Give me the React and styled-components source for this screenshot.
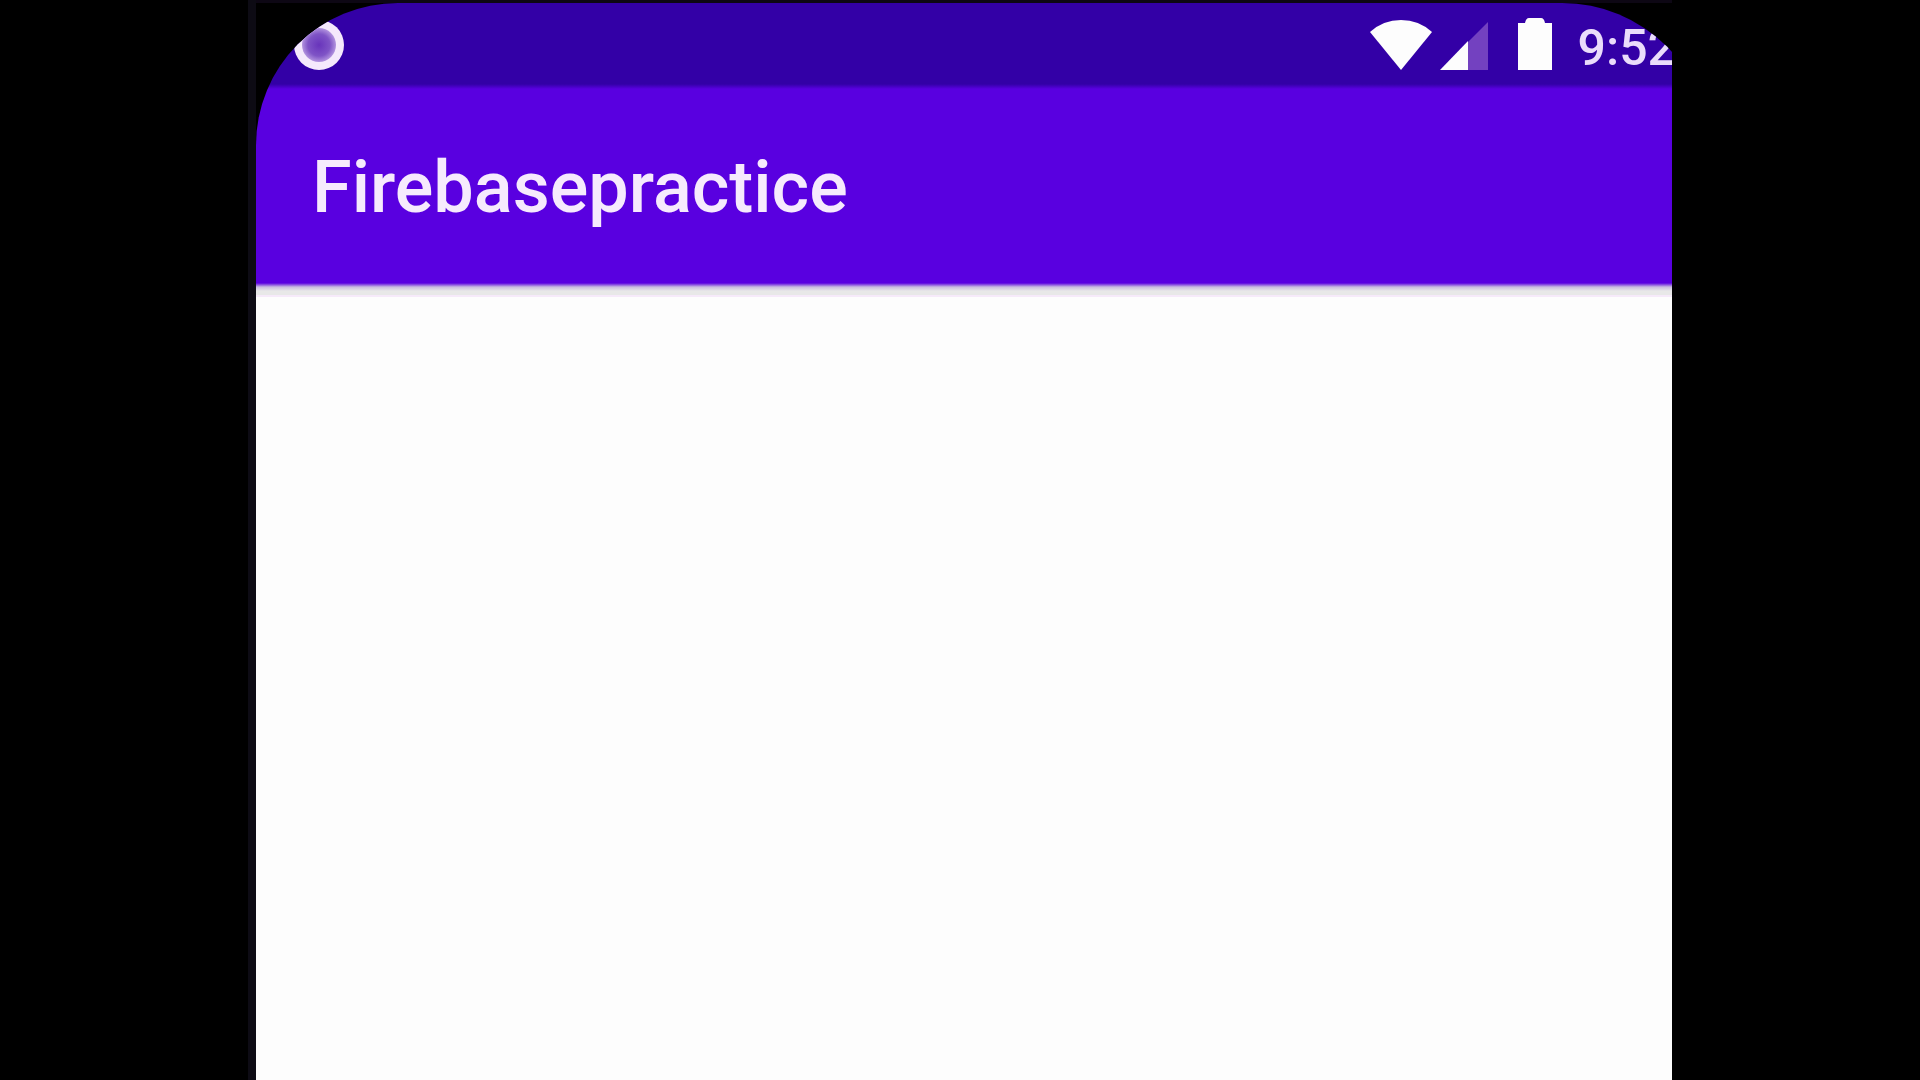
import React from "react";
import styled, { createGlobalStyle } from "styled-components";

const GlobalStyle = createGlobalStyle`
  * { box-sizing: border-box; }
  body { margin: 0; background: #000; }
`;

const Page = styled.div`
  display: flex;
  min-height: 100vh;
  padding: 0 248px;
  background: #000;
  font-family: Roboto, "Liberation Sans", sans-serif;
`;

const Frame = styled.div`
  flex: 1;
  min-width: 0;
  display: flex;
  padding: 3px 0 0 8px;
  overflow: hidden;
  background: linear-gradient(#0d0b14, #0d0b14) left / 8px 100% no-repeat,
    linear-gradient(#0d0714, #0d0714) top / 100% 3px no-repeat, #000;
`;

/* The device screen is wider than the visible frame, so its right side is cut. */
const Screen = styled.div`
  flex: 0 0 calc(100% + 38px);
  display: flex;
  flex-direction: column;
  overflow: hidden;
  border-radius: 142px 148px 0 0;
`;

const StatusBar = styled.header`
  display: flex;
  align-items: center;
  justify-content: space-between;
  height: 86px;
  padding: 0 34px 4px 37px;
  background: linear-gradient(#3300a6 81px, #5900e0);
`;

const StatusIcons = styled.div`
  display: flex;
  align-items: center;
`;

const Icon = styled.svg`
  display: block;
  flex: none;
  margin-right: ${(p) => p.$gap || 0}px;
`;

const Clock = styled.time`
  padding-top: 8px;
  color: #eadcfb;
  font-size: 50px;
  line-height: 60px;
  font-weight: 500;
`;

const AppBar = styled.div`
  display: flex;
  align-items: center;
  height: 194px;
  padding: 4px 56px 0;
  background: #5900e0;
`;

const Title = styled.h1`
  margin: 0;
  color: #f6eafd;
  font-size: 72px;
  line-height: 80px;
  font-weight: 500;
`;

const Content = styled.main`
  flex: 1;
  background: linear-gradient(#5900e0, #c9bce0 4px, #e8e8e8 8px, #e8e8e8 12px, #f6eafa 12px, #f6eafa 14px, #fdfdfd 14px);
`;

export default function App() {
  return (
    <Page>
      <GlobalStyle />
      <Frame>
        <Screen>
          <StatusBar>
            <Icon width="52" height="52" viewBox="0 0 52 52" aria-hidden="true">
              <defs>
                <radialGradient id="dot">
                  <stop offset="0" stopColor="#6834bb" />
                  <stop offset="0.65" stopColor="#7f54c6" />
                  <stop offset="1" stopColor="#b394df" />
                </radialGradient>
              </defs>
              <circle cx="26" cy="27" r="25" fill="#f5e9fc" />
              <circle cx="26" cy="27" r="17" fill="url(#dot)" />
            </Icon>
            <StatusIcons>
              <Icon $gap={8} width="62" height="54" viewBox="0 0 62 54" aria-hidden="true">
                <path d="M0 15Q13 3 31 3T62 15L31 53Z" fill="#fdfdfd" />
              </Icon>
              <Icon $gap={30} width="48" height="54" viewBox="0 0 48 54" aria-hidden="true">
                <path d="M48 5V53H28V25Z" fill="#7341c0" />
                <path d="M0 53L28 24V53Z" fill="#fdfdfd" />
              </Icon>
              <Icon $gap={26} width="34" height="54" viewBox="0 0 34 54" aria-hidden="true">
                <path d="M0 6H7Q8 1 11 1H23Q26 1 27 6H34V53H0Z" fill="#fdfdfd" />
              </Icon>
              <Clock>9:52</Clock>
            </StatusIcons>
          </StatusBar>
          <AppBar>
            <Title>Firebasepractice</Title>
          </AppBar>
          <Content />
        </Screen>
      </Frame>
    </Page>
  );
}
